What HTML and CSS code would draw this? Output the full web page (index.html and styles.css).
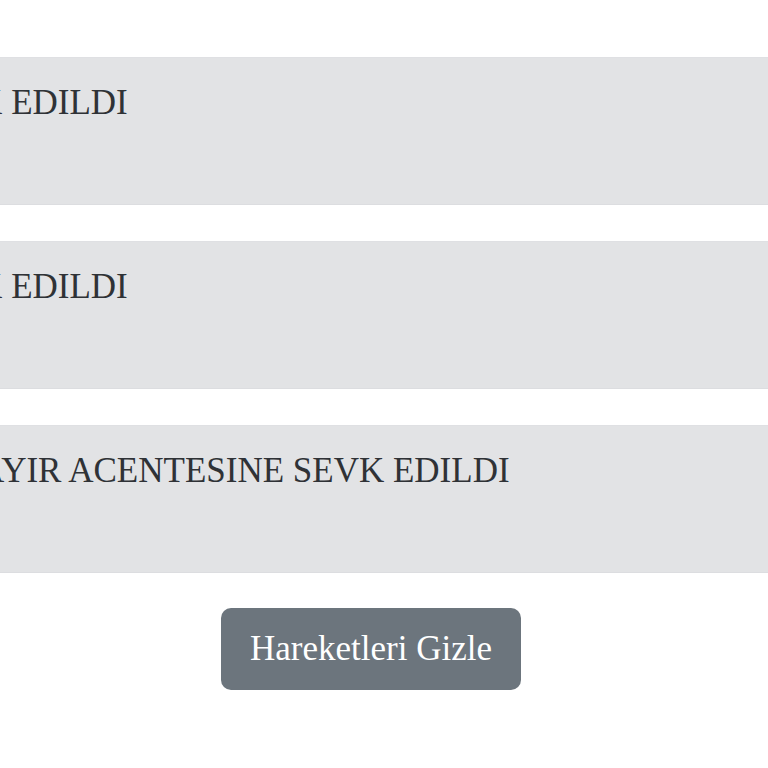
FILE: index.html
```html
<!DOCTYPE html>
<html lang="tr">
<head>
<meta charset="utf-8">
<link rel="stylesheet" href="styles.css">
</head>
<body>
<div class="viewport">
  <div class="track">
    <div class="alert"><p class="alert-text">SEVK EDILDI</p></div>
    <div class="alert"><p class="alert-text">SEVK EDILDI</p></div>
    <div class="alert"><p class="alert-text">SUÇAYIR ACENTESINE SEVK EDILDI</p></div>
    <div class="actions"><button class="btn" type="button">Hareketleri Gizle</button></div>
  </div>
</div>
</body>
</html>
```

FILE: styles.css
```css
html, body {
  margin: 0;
  padding: 0;
  background: #ffffff;
}
.viewport {
  width: 768px;
  height: 768px;
  overflow: hidden;
}
.track {
  width: 976px;
  margin-left: -117px;
  padding-top: 57px;
  display: flex;
  flex-direction: column;
  gap: 36px;
  font-family: "Liberation Serif", "Times New Roman", serif;
  font-size: 35px;
  line-height: 52px;
}
.alert {
  background: #e2e3e5;
  border-top: 1px solid #dfe0e3;
  border-bottom: 1px solid #dcdde0;
  padding: 19px 28px 75px;
  color: #2f3236;
}
.alert-text {
  margin: 0;
  white-space: nowrap;
}
.actions {
  display: flex;
  justify-content: center;
  margin-top: -1px;
}
.btn {
  font-family: inherit;
  font-size: 35px;
  line-height: 52px;
  color: #ffffff;
  background: #6c757d;
  border: none;
  border-radius: 10px;
  padding: 15px 29px;
}
```
